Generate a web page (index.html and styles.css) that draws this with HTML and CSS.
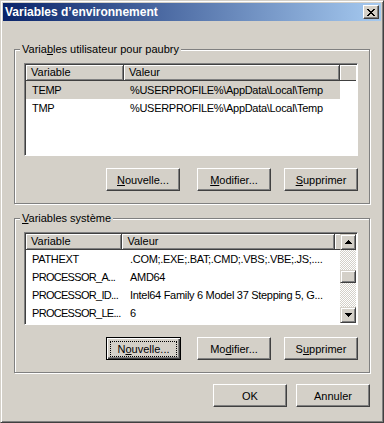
FILE: index.html
```html
<!DOCTYPE html>
<html lang="fr">
<head>
    <meta charset="UTF-8">
    <meta name="viewport" content="width=device-width, initial-scale=1.0">
    <title>Variables d’environnement</title>
    <link rel="stylesheet" href="styles.css">
</head>
<body>
    <div class="window">
        <div class="titlebar">
            <span class="title">Variables d’environnement</span>
            <button class="close-btn" title="Fermer">
                <svg width="8" height="7" viewBox="0 0 8 7" shape-rendering="crispEdges"><path d="M0 0h2v1H0zM6 0h2v1H6zM1 1h2v1H1zM5 1h2v1H5zM2 2h4v1H2zM3 3h2v1H3zM2 4h4v1H2zM1 5h2v1H1zM5 5h2v1H5zM0 6h2v1H0zM6 6h2v1H6z" fill="#000"/></svg>
            </button>
        </div>

        <div class="content">
            <fieldset class="group">
                <legend>Varia<u>b</u>les utilisateur pour paubry</legend>
                <div class="listview">
                    <div class="lv-main">
                        <div class="lv-header">
                            <div class="hd hd-name">Variable</div>
                            <div class="hd hd-value">Valeur</div>
                            <div class="hd-rest"></div>
                        </div>
                        <div class="lv-row selected">
                            <span class="cell cell-name">TEMP</span>
                            <span class="cell cell-value">%USERPROFILE%\AppData\Local\Temp</span>
                        </div>
                        <div class="lv-row">
                            <span class="cell cell-name">TMP</span>
                            <span class="cell cell-value">%USERPROFILE%\AppData\Local\Temp</span>
                        </div>
                    </div>
                </div>
                <div class="btn-row">
                    <button class="btn btn-new"><u>N</u>ouvelle...</button>
                    <button class="btn btn-edit"><u>M</u>odifier...</button>
                    <button class="btn"><u>S</u>upprimer</button>
                </div>
            </fieldset>

            <fieldset class="group group-system">
                <legend><u>V</u>ariables système</legend>
                <div class="listview">
                    <div class="lv-main">
                        <div class="lv-header">
                            <div class="hd hd-name">Variable</div>
                            <div class="hd hd-value">Valeur</div>
                            <div class="hd-rest"></div>
                        </div>
                        <div class="lv-row">
                            <span class="cell cell-name">PATHEXT</span>
                            <span class="cell cell-value">.COM;.EXE;.BAT;.CMD;.VBS;.VBE;.JS;....</span>
                        </div>
                        <div class="lv-row">
                            <span class="cell cell-name trunc">PROCESSOR_A...</span>
                            <span class="cell cell-value">AMD64</span>
                        </div>
                        <div class="lv-row">
                            <span class="cell cell-name trunc">PROCESSOR_ID...</span>
                            <span class="cell cell-value">Intel64 Family 6 Model 37 Stepping 5, G...</span>
                        </div>
                        <div class="lv-row">
                            <span class="cell cell-name trunc">PROCESSOR_LE...</span>
                            <span class="cell cell-value">6</span>
                        </div>
                    </div>
                    <div class="scrollbar">
                        <div class="sb-btn">
                            <svg width="7" height="4" viewBox="0 0 7 4" shape-rendering="crispEdges"><path d="M3 0h1v1h1v1h1v1h1v1H0V3h1V2h1V1h1z" fill="#000"/></svg>
                        </div>
                        <div class="sb-track"><div class="sb-thumb"></div></div>
                        <div class="sb-btn">
                            <svg width="7" height="4" viewBox="0 0 7 4" shape-rendering="crispEdges"><path d="M0 0h7v1H6v1H5v1H4v1H3V3H2V2H1V1H0z" fill="#000"/></svg>
                        </div>
                    </div>
                </div>
                <div class="btn-row">
                    <button class="btn btn-new default"><span class="focus">N<u>o</u>uvelle...</span></button>
                    <button class="btn btn-edit">Mo<u>d</u>ifier...</button>
                    <button class="btn">S<u>u</u>pprimer</button>
                </div>
            </fieldset>

            <div class="footer">
                <button class="btn">OK</button>
                <button class="btn">Annuler</button>
            </div>
        </div>
    </div>
</body>
</html>
```

FILE: styles.css
```css
body {
    margin: 0;
    font-family: "Liberation Sans", Arial, sans-serif;
    font-size: 11px;
    color: #000;
    background-color: #d4d0c8;
}
.window {
    width: 384px;
    height: 423px;
    box-sizing: border-box;
    padding: 2px;
    background-color: #d4d0c8;
    border: 1px solid;
    border-color: #d4d0c8 #404040 #404040 #d4d0c8;
    box-shadow: inset 1px 1px #fff, inset -1px -1px #808080;
}

/* title bar */
.titlebar {
    height: 18px;
    display: flex;
    align-items: center;
    justify-content: space-between;
    padding: 0 2px 0 2px;
    background: linear-gradient(to right, #0a246a, #a6caf0);
}
.title {
    color: #fff;
    font-weight: bold;
    font-size: 12px;
}
.close-btn {
    width: 16px;
    height: 14px;
    padding: 0;
    display: flex;
    align-items: center;
    justify-content: center;
    background-color: #d4d0c8;
    border: 1px solid;
    border-color: #fff #404040 #404040 #fff;
    box-shadow: inset -1px -1px #808080;
}

.content {
    padding: 0 11px;
}

/* group boxes */
.group {
    margin: 22px 0 0 0;
    padding: 7px 11px 12px 9px;
    min-width: 0;
    border: 1px solid #808080;
    box-shadow: inset 1px 1px #fff, 1px 1px #fff;
}
.group-system {
    margin-top: 8px;
}
.group legend {
    margin-left: -4px;
    padding: 0 2px;
    line-height: 13px;
    background-color: #d4d0c8;
}

/* list views */
.listview {
    height: 93px;
    box-sizing: border-box;
    padding: 1px;
    display: flex;
    background-color: #fff;
    border: 1px solid;
    border-color: #808080 #fff #fff #808080;
    box-shadow: inset 1px 1px #404040;
}
.lv-main {
    flex: 1;
    overflow: hidden;
}
.lv-header {
    display: flex;
    height: 16px;
}
.hd,
.hd-rest {
    box-sizing: border-box;
    height: 16px;
    line-height: 14px;
    padding-left: 5px;
    background-color: #d4d0c8;
    border-right: 1px solid #404040;
    border-bottom: 1px solid #404040;
    box-shadow: inset 1px 1px #fff, inset -1px -1px #808080;
    white-space: nowrap;
}
.hd-name {
    width: 98px;
}
.hd-value {
    width: 216px;
}
.hd-rest {
    flex: 1;
    border-right: none;
    box-shadow: inset 1px 1px #fff;
}
.lv-row {
    display: flex;
    width: 314px;
    height: 18px;
    line-height: 18px;
}
.lv-row.selected {
    background-color: #d4d0c8;
}
.cell {
    box-sizing: border-box;
    padding-left: 6px;
    letter-spacing: -0.3px;
    white-space: nowrap;
    overflow: hidden;
}
.cell-name {
    width: 98px;
}
.cell-name.trunc {
    letter-spacing: -0.7px;
}
.cell-value {
    width: 216px;
}

/* scrollbar */
.scrollbar {
    width: 16px;
    display: flex;
    flex-direction: column;
}
.sb-btn,
.sb-thumb {
    box-sizing: border-box;
    background-color: #d4d0c8;
    border: 1px solid;
    border-color: #d4d0c8 #404040 #404040 #d4d0c8;
    box-shadow: inset 1px 1px #fff, inset -1px -1px #808080;
}
.sb-btn {
    height: 16px;
    display: flex;
    align-items: center;
    justify-content: center;
}
.sb-track {
    flex: 1;
    background: repeating-conic-gradient(#d4d0c8 0 25%, #fff 0 50%) 0 0 / 2px 2px;
}
.sb-thumb {
    height: 13px;
    margin-top: 20px;
}

/* buttons */
.btn-row {
    display: flex;
    justify-content: flex-end;
    margin-top: 12px;
}
.btn {
    box-sizing: border-box;
    width: 74px;
    height: 23px;
    padding: 0;
    font-family: inherit;
    font-size: 11px;
    color: #000;
    background-color: #d4d0c8;
    border: 1px solid;
    border-color: #fff #404040 #404040 #fff;
    box-shadow: inset -1px -1px #808080;
}
.btn-new {
    margin-right: 17px;
}
.btn-edit {
    margin-right: 13px;
}
.btn.default {
    width: 75px;
    margin-right: 16px;
    border-color: #000;
    box-shadow: inset 1px 1px #fff, inset -1px -1px #404040, inset -2px -2px #808080;
}
.btn .focus {
    display: block;
    margin: 0 3px;
    line-height: 14px;
    border: 1px dotted #000;
}

.footer {
    display: flex;
    justify-content: flex-end;
    gap: 9px;
    margin-top: 11px;
}
```
